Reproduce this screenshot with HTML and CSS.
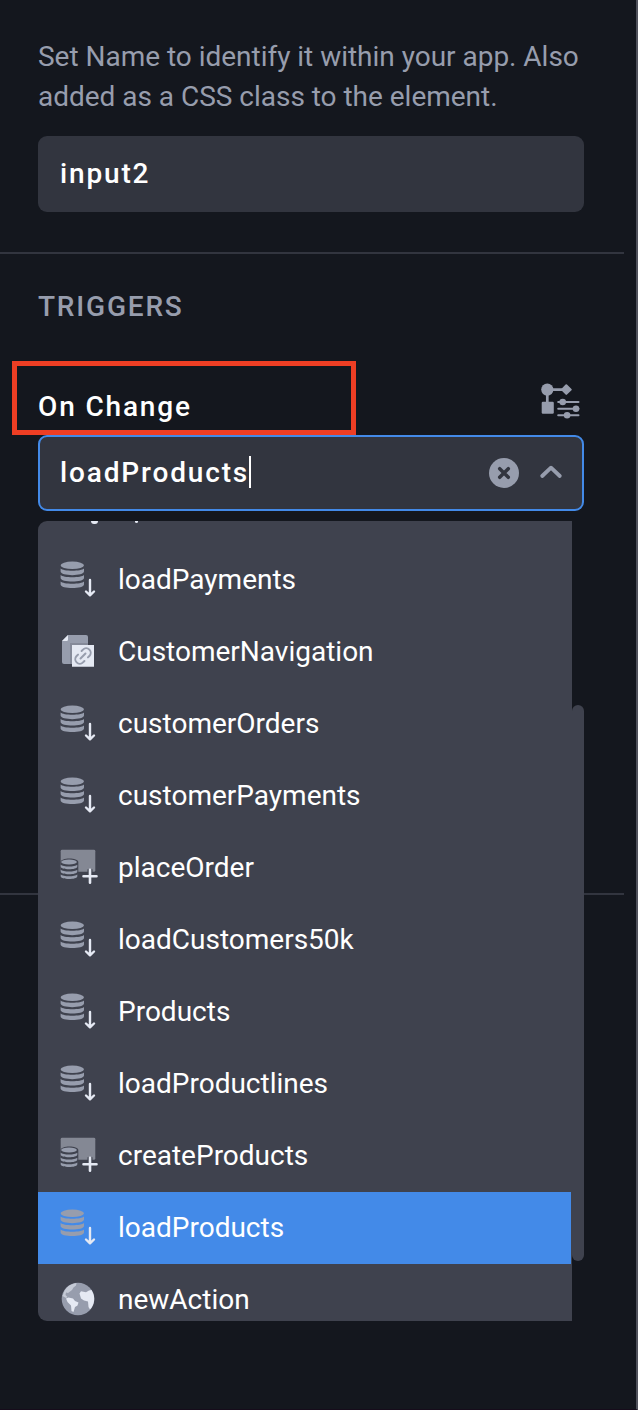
FILE: index.html
```html
<!DOCTYPE html>
<html lang="en">
<head>
<meta charset="utf-8">
<title>Triggers</title>
<link rel="stylesheet" href="styles.css">
</head>
<body>
<svg class="sprite" aria-hidden="true">
  <symbol id="load" viewBox="0 0 40 40">
    <g fill="#979dad">
      <ellipse cx="14.3" cy="5.3" rx="11.7" ry="3.7"/>
      <path id="band" d="M2.6 8.6C5 11.6 23.6 11.6 26 8.6V11.6C26 16.3 2.6 16.3 2.6 11.6Z"/>
      <use href="#band" y="6.4"/><use href="#band" y="12.8"/>
    </g>
    <path d="M32 20V35M28 31.5L32 35.3L36 31.5" fill="none" stroke="#e5e9f3" stroke-width="2.4" stroke-linecap="round" stroke-linejoin="round"/>
  </symbol>
  <symbol id="create" viewBox="0 0 40 40">
    <rect x="2.7" y="1.8" width="34.6" height="22" rx="1.4" fill="#848894"/>
    <path d="M2.6 14C2.6 9.3 20.3 9.3 20.3 14V24H2.6Z" fill="#3f424e"/>
    <g fill="#979dad">
      <ellipse cx="11" cy="14.1" rx="7.8" ry="2.5"/>
      <path id="small-band" d="M2.7 16.8C5 19.2 17 19.2 19.3 16.8V18.5C19.3 22.2 2.7 22.2 2.7 18.5Z"/>
      <use href="#small-band" y="4.9"/><use href="#small-band" y="9.7"/>
    </g>
    <path d="M32 21.2V35.4M24.9 28.3H39.1" stroke="#3f424e" stroke-width="5"/>
    <path d="M32 21.8V34.8M25.5 28.3H38.5" stroke="#e5e9f3" stroke-width="2.6" stroke-linecap="round"/>
  </symbol>
  <symbol id="navigate" viewBox="0 0 40 40">
    <path d="M10 3H28Q30 3 30 5V32H6Q4 32 4 30V9Z" fill="#979dad"/>
    <path d="M13 32V12H30" fill="none" stroke="#858a99" stroke-width="2"/>
    <path d="M4 9L10 3V7.500Q10 9 8.500 9Z" fill="#e5e9f3"/>
    <path d="M14 13H36V34.700H14Z" fill="#e5e9f3"/>
    <g fill="none" stroke="#979dad" stroke-width="2" stroke-linecap="round" transform="rotate(-45 25 24)">
      <path d="M22.500 19.500H20.500A4.500 4.500 0 0 0 20.500 28.500H22.500M27.500 19.500H29.500A4.500 4.500 0 0 1 29.500 28.500H27.500M21.500 24H28.500"/>
    </g>
  </symbol>
  <symbol id="globe" viewBox="0 0 40 40">
    <circle cx="20" cy="19" r="16.300" fill="#979dad"/>
    <path d="M6 12C8 7 12 4 18.500 3L18 5.500L15.500 7.500L14 10L12 11.500L10 13L8 12.500L7.500 15L9.500 17L8 18L4.500 16Z" fill="#c5cad6"/>
    <path d="M8 18.500L10.500 17.500L15 18.500L17 21L20.500 22.500L19.500 25.500L17 27L15.500 32L13.500 31L13 25.500L9.500 22Z" fill="#e5e9f3"/>
    <path d="M21.500 13.500L23 11.300L28 12.300L31 10.500L33.500 10C38 17 36.500 25 32 29.500L30.500 27L30 21.500L26 20.500L23 18.500Z" fill="#e5e9f3"/>
  </symbol>
</svg>
<main class="panel">
  <section class="naming">
    <p class="hint">Set Name to identify it within your app. Also<br>added as a CSS class to the element.</p>
    <div class="field">input2</div>
  </section>
  <section class="triggers">
    <h2 class="title">TRIGGERS</h2>
    <div class="trigger-head">
      <span class="trigger-name">On Change</span>
      <svg class="flow-icon" viewBox="0 0 40 40" fill="#979dad" stroke="#979dad">
        <path d="M7.300 10V26M7.300 9.600H26" fill="none" stroke-width="2.700"/>
        <circle cx="7.300" cy="9.600" r="6.100" stroke="none"/>
        <path d="M26.300 5.300L30.800 9.600L26.300 13.900L22 9.600Z" stroke-width="2" stroke-linejoin="round"/>
        <rect x="1.700" y="21.700" width="12.100" height="12.100" rx="1.200" stroke="none"/>
        <path d="M18.200 22H38.500M18.200 28.700H38.500M18.200 35.300H38.500" stroke-width="2" stroke-linecap="round"/>
        <g stroke="none"><circle cx="22.700" cy="22" r="3.300"/><circle cx="36" cy="28.700" r="3.300"/><circle cx="27.100" cy="35.300" r="3.300"/></g>
      </svg>
      <div class="highlight"></div>
    </div>
    <div class="select">
      <div class="field focused">
        <span>loadProducts</span><i class="caret"></i>
        <svg class="clear" viewBox="0 0 30 30"><circle cx="15" cy="15" r="15" fill="#979dad"/><path d="M10.700 10.700L19.300 19.300M19.300 10.700L10.700 19.300" stroke="#32353f" stroke-width="3.500" stroke-linecap="round"/></svg>
        <svg class="chevron" viewBox="0 0 24 16"><path d="M3.200 12L12 3.700L20.800 12" fill="none" stroke="#979dad" stroke-width="3.800" stroke-linecap="round" stroke-linejoin="round"/></svg>
      </div>
      <div class="menu">
        <ul class="list">
          <li class="scrolled"><i class="trace"></i><i class="trace dot"></i></li>
          <li><svg><use href="#load"/></svg>loadPayments</li>
          <li><svg><use href="#navigate"/></svg>CustomerNavigation</li>
          <li><svg><use href="#load"/></svg>customerOrders</li>
          <li><svg><use href="#load"/></svg>customerPayments</li>
          <li><svg><use href="#create"/></svg>placeOrder</li>
          <li><svg><use href="#load"/></svg>loadCustomers50k</li>
          <li><svg><use href="#load"/></svg>Products</li>
          <li><svg><use href="#load"/></svg>loadProductlines</li>
          <li><svg><use href="#create"/></svg>createProducts</li>
          <li class="selected"><svg><use href="#load"/></svg>loadProducts</li>
          <li><svg><use href="#globe"/></svg>newAction</li>
        </ul>
        <div class="thumb"></div>
      </div>
    </div>
  </section>
</main>
</body>
</html>
```
FILE: styles.css
```css
* { box-sizing: border-box; }
body { margin: 0; background: #14171e; font-family: Roboto, "Liberation Sans", sans-serif; font-size: 28px; color: #fff; }
.sprite { position: absolute; width: 0; height: 0; }
.panel { height: 1410px; overflow: hidden; border-right: 2px solid #50525c; border-bottom: 1px solid #160c1b; }
.naming, .triggers { width: 624px; padding: 0 40px 0 38px; border-bottom: 2px solid #32353f; }
.naming { height: 254px; padding-top: 37px; }
.triggers { height: 641px; padding-top: 33px; }
.hint { margin: 0 0 19px; line-height: 40px; color: #979dad; letter-spacing: -0.02px; white-space: nowrap; }
.field { display: flex; align-items: center; height: 76px; padding: 0 22px 2px; border-radius: 9px; background: #32353f; font-weight: 500; letter-spacing: 1.85px; }
.title { margin: 0; height: 40px; line-height: 40px; font-size: 28px; font-weight: 500; letter-spacing: 1.8px; color: #979dad; }
.trigger-head { position: relative; display: flex; justify-content: space-between; height: 108px; padding-top: 53px; }
.trigger-name { height: 54px; line-height: 54px; font-weight: 500; letter-spacing: 1.85px; }
.flow-icon { width: 40px; height: 40px; margin-right: 4px; }
.highlight { position: absolute; left: -26px; top: 34px; width: 344px; height: 74px; border: 5px solid #ee3e24; }
.select { position: relative; }
.focused { border: 2px solid #438ae8; padding: 0 19px 2px 20px; }
.caret { width: 2px; height: 32px; background: #fff; }
.clear { width: 30px; height: 30px; margin: 2px 0 0 auto; }
.chevron { width: 24px; height: 16px; margin-left: 20px; }
.menu { position: absolute; left: 0; top: 86px; width: 546px; height: 800px; }
.list { width: 534px; height: 800px; margin: 0; padding: 0; list-style: none; overflow: hidden; background: #3f424e; border-radius: 9px 0 0 9px; }
.list li { display: flex; align-items: center; gap: 20px; height: 72px; width: 533px; padding: 0 0 2px 20px; letter-spacing: 0; }
.list svg { width: 40px; height: 40px; margin-top: 2px; }
.list .scrolled { height: 23px; align-items: flex-start; gap: 37px; padding-left: 53px; }
.trace { width: 7px; height: 3px; border-radius: 0 0 3px 3px; background: #e5e9f3; }
.dot { width: 3px; height: 2px; }
.selected { background: #438ae8; }
.thumb { position: absolute; right: 0; top: 184px; width: 12px; height: 556px; border-radius: 6px; background: #3f424e; }
```
